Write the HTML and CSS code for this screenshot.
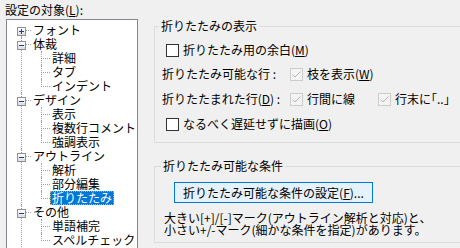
FILE: index.html
```html
<!DOCTYPE html>
<html lang="ja">
<head>
    <meta charset="UTF-8">
    <title>設定</title>
    <link rel="stylesheet" href="styles.css">
</head>
<body>

    <div class="page">

        <!-- left: tree -->
        <div class="side">
            <div class="side-label">設定の対象(<u>L</u>):</div>
            <ul class="tree">
                <li><div class="row"><span class="tog plus"></span><span class="txt">フォント</span></div></li>
                <li><div class="row"><span class="tog"></span><span class="txt">体裁</span></div>
                    <ul class="kids">
                        <li><span class="txt">詳細</span></li>
                        <li><span class="txt">タブ</span></li>
                        <li><span class="txt">インデント</span></li>
                    </ul>
                </li>
                <li><div class="row"><span class="tog"></span><span class="txt">デザイン</span></div>
                    <ul class="kids">
                        <li><span class="txt">表示</span></li>
                        <li><span class="txt">複数行コメント</span></li>
                        <li><span class="txt">強調表示</span></li>
                    </ul>
                </li>
                <li><div class="row"><span class="tog"></span><span class="txt">アウトライン</span></div>
                    <ul class="kids">
                        <li><span class="txt">解析</span></li>
                        <li><span class="txt">部分編集</span></li>
                        <li><span class="txt sel">折りたたみ</span></li>
                    </ul>
                </li>
                <li><div class="row"><span class="tog"></span><span class="txt">その他</span></div>
                    <ul class="kids">
                        <li><span class="txt">単語補完</span></li>
                        <li><span class="txt">スペルチェック</span></li>
                    </ul>
                </li>
            </ul>
        </div>

        <!-- right: options -->
        <div class="main">

            <fieldset class="group">
                <legend>折りたたみの表示</legend>

                <div class="check-row">
                    <span class="box"></span>
                    <span>折りたたみ用の余白(<u>M</u>)</span>
                </div>

                <div class="opt-row">
                    <span class="opt-label">折りたたみ可能な行 :</span>
                    <div class="opt">
                        <span class="box off"><svg width="11" height="11" viewBox="0 0 11 11"><polyline points="1.5,5.5 4,8 9.5,2.5" fill="none" stroke="#b4b4b4" stroke-width="1"/></svg></span>
                        <span>枝を表示(<u>W</u>)</span>
                    </div>
                </div>

                <div class="opt-row second">
                    <span class="opt-label">折りたたまれた行(<u>D</u>) :</span>
                    <div class="opt first">
                        <span class="box off"><svg width="11" height="11" viewBox="0 0 11 11"><polyline points="1.5,5.5 4,8 9.5,2.5" fill="none" stroke="#b4b4b4" stroke-width="1"/></svg></span>
                        <span>行間に線</span>
                    </div>
                    <div class="opt">
                        <span class="box off"><svg width="11" height="11" viewBox="0 0 11 11"><polyline points="1.5,5.5 4,8 9.5,2.5" fill="none" stroke="#b4b4b4" stroke-width="1"/></svg></span>
                        <span>行末に｢..｣</span>
                    </div>
                </div>

                <div class="check-row last">
                    <span class="box"></span>
                    <span>なるべく遅延せずに描画(<u>O</u>)</span>
                </div>
            </fieldset>

            <fieldset class="group cond">
                <legend>折りたたみ可能な条件</legend>
                <button class="btn">折りたたみ可能な条件の設定(<u>F</u>)...</button>
                <p class="note">大きい[+]/[-]マーク(アウトライン解析と対応)と、<br>小さい+/-マーク(細かな条件を指定)があります。</p>
            </fieldset>

        </div>
    </div>

</body>
</html>
```

FILE: styles.css
```css
html,
body {
    margin: 0;
    width: 460px;
    height: 248px;
    overflow: hidden;
}

body {
    background: #f0f0f0;
    color: #000;
    font-family: "Noto Sans CJK JP", sans-serif;
    font-size: 12px;
    line-height: 14px;
}

u {
    text-decoration: underline;
    text-underline-offset: 1px;
}

.page {
    display: flex;
}

/* left side */
.side {
    width: 148px;
    padding-left: 6px;
    flex-shrink: 0;
}

.side-label {
    margin: 3px 0 2px -1px;
    height: 14px;
}

.tree {
    list-style: none;
    margin: 0;
    padding: 3px 0 0 0;
    width: 130px;
    height: 226px;
    overflow: hidden;
    background: #fff;
    border: 1px solid #828790;
    border-bottom: none;
}

.tree > li {
    position: relative;
    padding-left: 26px;
}

.tree > li::before {
    content: "";
    position: absolute;
    left: 14px;
    top: 0;
    bottom: -20px;
    border-left: 1px dotted #a0a0a0;
}

.tree > li:first-child::before {
    top: 7px;
}

.row {
    position: relative;
    height: 14px;
}

.row::after {
    content: "";
    position: absolute;
    left: -7px;
    top: 7px;
    width: 5px;
    border-top: 1px dotted #a0a0a0;
}

.tog {
    position: absolute;
    left: -16px;
    top: 4px;
    width: 9px;
    height: 9px;
    box-sizing: border-box;
    border: 1px solid #919191;
    background: linear-gradient(#ffffff, #dcdcdc);
    z-index: 1;
}

.tog::before {
    content: "";
    position: absolute;
    left: 1px;
    top: 3px;
    width: 5px;
    height: 1px;
    background: #1c3f95;
}

.plus::after {
    content: "";
    position: absolute;
    left: 3px;
    top: 1px;
    width: 1px;
    height: 5px;
    background: #1c3f95;
}

.kids {
    list-style: none;
    margin: 0;
    padding: 0;
}

.kids li {
    position: relative;
    height: 14px;
    padding-left: 19px;
}

.kids li::before {
    content: "";
    position: absolute;
    left: 8px;
    top: 0;
    bottom: 0;
    border-left: 1px dotted #a0a0a0;
}

.kids li:last-child::before {
    bottom: 6px;
}

.kids li::after {
    content: "";
    position: absolute;
    left: 10px;
    top: 7px;
    width: 7px;
    border-top: 1px dotted #a0a0a0;
}

.txt {
    display: inline-block;
    white-space: nowrap;
}

.sel {
    background: #0078d7;
    color: #fff;
    padding: 0 2px;
    margin-left: -2px;
    outline: 1px dotted #f0a040;
    outline-offset: -1px;
}

/* right side */
.main {
    padding-top: 19px;
}

.group {
    margin: 0;
    width: 340px;
    padding: 10px 0 11px 7px;
    border: 1px solid #dcdcdc;
}

.group legend {
    padding: 0 2px;
    margin-left: -3px;
    line-height: 14px;
}

.check-row {
    display: flex;
    align-items: center;
    gap: 4px;
    height: 14px;
    margin-left: 4px;
}

.check-row.last {
    margin-top: 11px;
}

.box {
    width: 13px;
    height: 13px;
    box-sizing: border-box;
    border: 1px solid #333;
    background: #fff;
    flex-shrink: 0;
}

.box.off {
    border-color: #cccccc;
    background: #f4f4f4;
}

.box svg {
    display: block;
}

.opt-row {
    display: flex;
    align-items: center;
    height: 14px;
    margin-top: 10px;
}

.opt-row.second {
    margin-top: 11px;
}

.opt-label {
    width: 128px;
    flex-shrink: 0;
    white-space: nowrap;
}

.opt {
    display: flex;
    align-items: center;
    gap: 4px;
    white-space: nowrap;
}

.opt.first {
    width: 88px;
}

.cond {
    margin-top: 16px;
    padding: 9px 0 6px 9px;
}

.btn {
    display: block;
    margin-left: 10px;
    width: 199px;
    height: 21px;
    padding: 0;
    border: 1px solid #0078d7;
    background: #e5f1fb;
    font-family: inherit;
    font-size: 12px;
    color: #000;
}

.note {
    margin: 9px 0 0 0;
    line-height: 12px;
    white-space: nowrap;
}
```
